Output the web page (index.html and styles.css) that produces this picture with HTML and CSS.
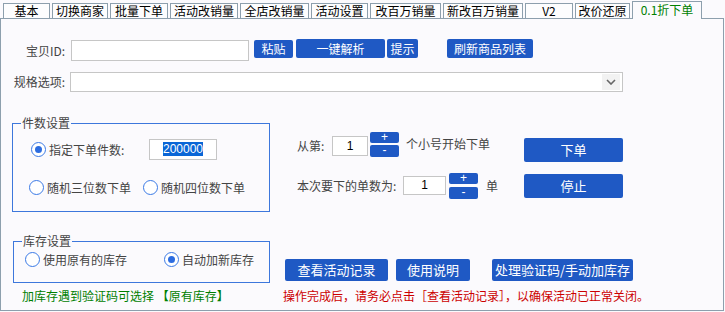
FILE: index.html
```html
<!DOCTYPE html>
<html lang="zh-CN">
<head>
    <meta charset="UTF-8">
    <title>0.1折下单</title>
    <link rel="stylesheet" href="styles.css">
</head>
<body>
<div class="tabs">
    <div class="tab">基本</div>
    <div class="tab">切换商家</div>
    <div class="tab">批量下单</div>
    <div class="tab">活动改销量</div>
    <div class="tab">全店改销量</div>
    <div class="tab">活动设置</div>
    <div class="tab">改百万销量</div>
    <div class="tab">新改百万销量</div>
    <div class="tab">V2</div>
    <div class="tab">改价还原</div>
    <div class="tab active">0.1折下单</div>
</div>
<div class="panel">
    <!-- 宝贝ID -->
    <div class="row row-id">
        <span class="lbl lbl-id">宝贝ID:</span>
        <div class="input input-id"></div>
        <button class="btn btn-paste">粘贴</button>
        <button class="btn btn-parse">一键解析</button>
        <button class="btn btn-tip">提示</button>
        <button class="btn btn-refresh">刷新商品列表</button>
    </div>
    <!-- 规格 -->
    <div class="row row-spec">
        <span class="lbl lbl-spec">规格选项:</span>
        <div class="select">
            <span class="select-arrow">
                <svg width="10" height="6" viewBox="0 0 10 6"><path d="M1 1 L5 5 L9 1" fill="none" stroke="#666" stroke-width="1.6"/></svg>
            </span>
        </div>
    </div>

    <div class="row mid">
        <div class="group group-count">
            <span class="group-title">件数设置</span>
            <div class="grow grow-1">
                <span class="radio on"></span>
                <span class="rlabel rlabel-fix">指定下单件数:</span>
                <div class="input input-count"><span class="selected">200000</span></div>
            </div>
            <div class="grow grow-2">
                <span class="radio"></span>
                <span class="rlabel rlabel-rand">随机三位数下单</span>
                <span class="radio"></span>
                <span class="rlabel">随机四位数下单</span>
            </div>
        </div>

        <div class="order">
            <div class="orow orow-a">
                <span class="olabel olabel-from">从第:</span>
                <div class="input input-from">1</div>
                <div class="spin spin-a">
                    <span class="spin-btn">+</span>
                    <span class="spin-btn">-</span>
                </div>
                <span class="otext otext-a">个小号开始下单</span>
                <button class="btn btn-big btn-order">下单</button>
            </div>
            <div class="orow orow-b">
                <span class="olabel olabel-num">本次要下的单数为:</span>
                <div class="input input-num">1</div>
                <div class="spin spin-b">
                    <span class="spin-btn">+</span>
                    <span class="spin-btn">-</span>
                </div>
                <span class="otext otext-b">单</span>
                <button class="btn btn-big btn-stop">停止</button>
            </div>
        </div>
    </div>

    <div class="row bottom">
        <div class="group group-stock">
            <span class="group-title">库存设置</span>
            <div class="grow grow-stock">
                <span class="radio"></span>
                <span class="rlabel rlabel-old">使用原有的库存</span>
                <span class="radio on"></span>
                <span class="rlabel">自动加新库存</span>
            </div>
        </div>
        <div class="actions">
            <button class="btn btn-log">查看活动记录</button>
            <button class="btn btn-help">使用说明</button>
            <button class="btn btn-captcha">处理验证码/手动加库存</button>
        </div>
    </div>

    <div class="row notes">
        <span class="note-green">加库存遇到验证码可选择 【原有库存】</span>
        <span class="note-red">操作完成后，请务必点击［查看活动记录］，以确保活动已正常关闭。</span>
    </div>
</div>
</body>
</html>
```

FILE: styles.css
```css
*{
    margin: 0;
    padding: 0;
}
body{
    background: #fbfafd;
    font-family: "Noto Sans CJK SC", "Liberation Sans", sans-serif;
    font-size: 12px;
    color: #444444;
    width: 725px;
    height: 312px;
    overflow: hidden;
}

/* 选项卡 */
.tabs{
    display: flex;
    align-items: flex-end;
    height: 18px;
    padding-left: 3px;
}
.tab{
    box-sizing: border-box;
    height: 15px;
    border: 1px solid #8d9fad;
    border-bottom: none;
    margin-right: 2px;
    text-align: center;
    line-height: 14px;
    color: #000000;
    background: #fdfdfe;
    white-space: nowrap;
}
.tab:nth-child(1){ width: 47px; }
.tab:nth-child(2){ width: 56px; }
.tab:nth-child(3){ width: 58px; }
.tab:nth-child(4){ width: 68px; }
.tab:nth-child(5){ width: 69px; }
.tab:nth-child(6){ width: 57px; }
.tab:nth-child(7){ width: 71px; }
.tab:nth-child(8){ width: 80px; }
.tab:nth-child(9){ width: 48px; }
.tab:nth-child(10){ width: 55px; }
.tab.active{
    width: 70px;
    height: 18px;
    margin-bottom: -1px;
    line-height: 16px;
    color: #008000;
    background: #fbfafd;
    position: relative;
    z-index: 1;
}

.panel{
    box-sizing: border-box;
    width: 724px;
    height: 293px;
    border: 1px solid #8d9fad;
    background: #fbfafd;
}

.row{
    display: flex;
    align-items: flex-start;
}
.lbl{
    width: 64px;
    text-align: right;
    flex: none;
}
.input{
    box-sizing: border-box;
    border: 1px solid #c6c6c6;
    background: #ffffff;
    flex: none;
    color: #000000;
    font-family: "Liberation Sans", sans-serif;
    font-size: 12px;
    text-align: center;
}

/* 按钮 */
.btn{
    border: none;
    border-radius: 2px;
    background: #1f59c4;
    color: #ffffff;
    font-family: "Noto Sans CJK SC", sans-serif;
    font-size: 12px;
    height: 19px;
    line-height: 19px;
    flex: none;
    cursor: pointer;
}

.row-id{
    margin-top: 20px;
}
.lbl-id{
    margin-top: 1px;
    line-height: 21px;
}
.input-id{
    margin: 1px 0 0 6px;
    width: 178px;
    height: 21px;
}
.btn-paste{
    margin: 1px 0 0 5px;
    width: 39px;
    height: 18px;
    line-height: 18px;
}
.btn-parse{
    margin-left: 3px;
    width: 89px;
}
.btn-tip{
    margin-left: 2px;
    width: 31px;
}
.btn-refresh{
    margin-left: 29px;
    width: 86px;
}

.row-spec{
    margin-top: 11px;
}
.lbl-spec{
    line-height: 20px;
}
.select{
    box-sizing: border-box;
    margin-left: 5px;
    width: 553px;
    height: 20px;
    border: 1px solid #c6c6c6;
    background: #ffffff;
    display: flex;
    justify-content: flex-end;
    padding: 1px 2px 1px 0;
}
.select-arrow{
    width: 18px;
    background: #f2f2f2;
    display: flex;
    align-items: center;
    justify-content: center;
}

/* 分组框 */
.group{
    box-sizing: border-box;
    border: 1px solid #3d77dc;
    position: relative;
    flex: none;
}
.group-title{
    position: absolute;
    left: 8px;
    top: -8px;
    padding: 0 1px;
    line-height: 14px;
    background: #fbfafd;
    color: #444444;
}
.grow{
    display: flex;
    align-items: center;
}
.radio{
    box-sizing: border-box;
    width: 15px;
    height: 15px;
    border: 1.5px solid #3b7ae6;
    border-radius: 50%;
    background: #ffffff;
    flex: none;
    display: flex;
    align-items: center;
    justify-content: center;
}
.radio.on::after{
    content: "";
    width: 7px;
    height: 7px;
    border-radius: 50%;
    background: #2c6ce0;
}
.rlabel{
    margin-left: 3px;
    line-height: 15px;
    flex: none;
}

.mid{
    margin-top: 0;
}
.group-count{
    margin: 31px 0 0 11px;
    width: 258px;
    height: 89px;
}
.grow-1{
    margin: 15px 0 0 18px;
    height: 21px;
}
.rlabel-fix{
    width: 100px;
}
.input-count{
    width: 68px;
    height: 21px;
    line-height: 19px;
}
.selected{
    background: #0a66d6;
    color: #ffffff;
}
.grow-2{
    margin: 20px 0 0 16px;
}
.rlabel-rand{
    width: 96px;
}

/* 下单区域 */
.order{
    margin: 40px 0 0 27px;
}
.orow{
    display: flex;
    align-items: flex-start;
}
.olabel{
    line-height: 20px;
    flex: none;
}
.olabel-from{
    width: 35px;
    margin-top: 4px;
}
.input-from{
    margin-top: 4px;
    width: 36px;
    height: 20px;
    line-height: 18px;
}
.spin{
    display: flex;
    flex-direction: column;
    width: 29px;
    flex: none;
}
.spin-btn{
    height: 11px;
    line-height: 11px;
    background: #1f59c4;
    border-radius: 2px;
    color: #ffffff;
    text-align: center;
    font-family: "Liberation Sans", sans-serif;
    font-size: 12px;
}
.spin-btn + .spin-btn{
    height: 12px;
    line-height: 10px;
}
.spin-a{
    margin-left: 2px;
}
.spin-a .spin-btn + .spin-btn{
    margin-top: 2px;
}
.otext{
    line-height: 20px;
    flex: none;
}
.otext-a{
    margin: 2px 0 0 7px;
    width: 118px;
}
.btn-big{
    width: 99px;
    height: 24px;
    line-height: 24px;
    font-size: 13px;
}
.btn-order{
    margin-top: 6px;
}
.orow-b{
    margin-top: 11px;
}
.olabel-num{
    width: 106px;
    margin-top: 3px;
}
.input-num{
    margin-top: 3px;
    width: 43px;
    height: 19px;
    line-height: 17px;
}
.spin-b{
    margin-left: 3px;
}
.spin-b .spin-btn + .spin-btn{
    margin-top: 3px;
}
.otext-b{
    margin: 3px 0 0 8px;
    width: 38px;
}
.btn-stop{
    margin-top: 1px;
}

/* 库存设置 */
.bottom{
    margin-top: 29px;
}
.group-stock{
    margin-left: 12px;
    width: 257px;
    height: 42px;
}
.grow-stock{
    margin: 10px 0 0 11px;
}
.rlabel-old{
    width: 121px;
}
.actions{
    display: flex;
    margin: 18px 0 0 15px;
}
.actions .btn{
    height: 22px;
    line-height: 22px;
    font-size: 13px;
}
.btn-log{
    width: 103px;
}
.btn-help{
    margin-left: 8px;
    width: 74px;
}
.btn-captcha{
    margin-left: 22px;
    width: 141px;
}

.notes{
    margin-top: 6px;
    line-height: 14px;
}
.note-green{
    margin-left: 21px;
    width: 261px;
    color: #008000;
    flex: none;
}
.note-red{
    color: #cc0000;
    white-space: nowrap;
}
```
